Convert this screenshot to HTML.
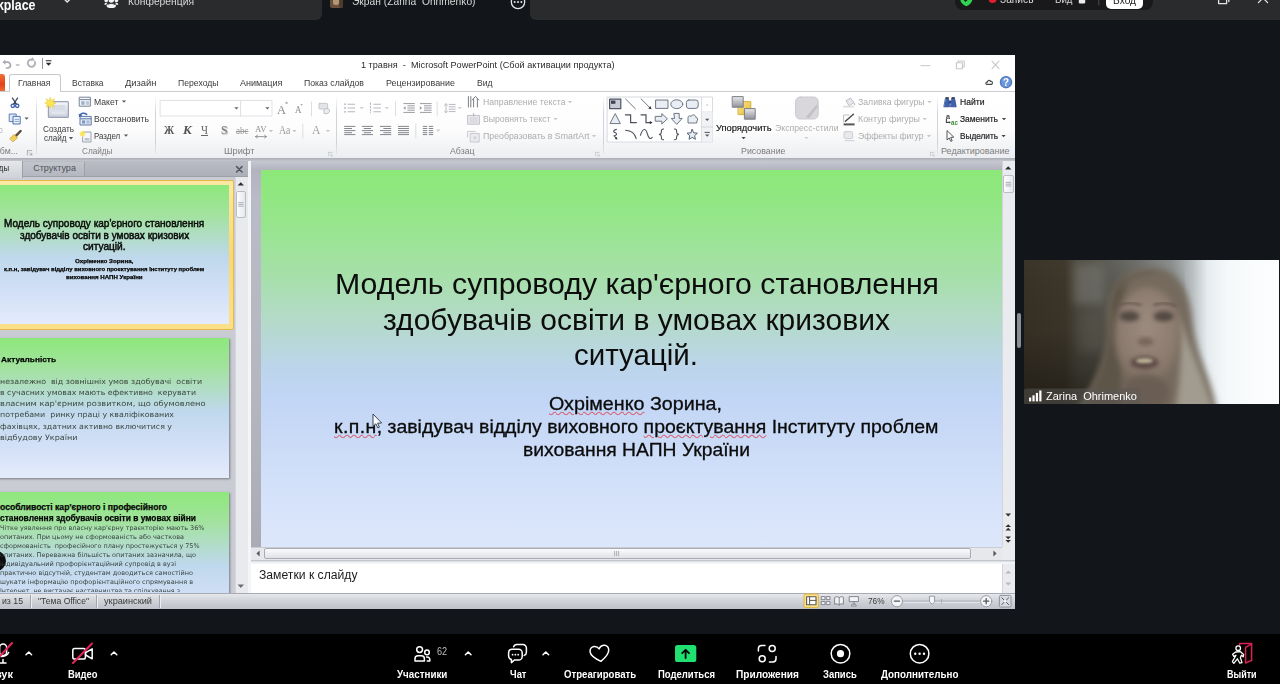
<!DOCTYPE html>
<html lang="uk">
<head>
<meta charset="utf-8">
<title>Zoom</title>
<style>
html,body{margin:0;padding:0;}
body{width:1280px;height:684px;overflow:hidden;background:#12161a;position:relative;font-family:"Liberation Sans","DejaVu Sans",sans-serif;}
.abs{position:absolute;}
.t{position:absolute;white-space:nowrap;line-height:1;transform-origin:0 0;font-size:11px;color:#3b3b3b;}
svg{position:absolute;overflow:visible;}
/* top bar */
#topbar{left:0;top:0;width:1280px;height:19.5px;background:#2a2b2d;}
#acttab{left:316px;top:-10px;width:220px;height:29.5px;background:#2a2b2d;}
#acttab i{position:absolute;left:6px;top:0;width:208px;height:29.5px;background:#12161a;}
#acttab:before,#acttab:after{content:"";position:absolute;top:0;width:6px;height:29.5px;background:#2a2b2d;z-index:2;}
#acttab:before{left:0;border-bottom-right-radius:6px;}
#acttab:after{right:0;border-bottom-left-radius:6px;}
#acttab b{position:absolute;left:0;top:19.5px;width:220px;height:10px;background:#12161a;z-index:1;}
#pill{left:955px;top:-10px;width:198px;height:20px;border-radius:8px;background:#19191b;}
#vhod{left:1106px;top:-10px;width:37px;height:19px;border-radius:5px;background:#fff;}
.w{color:#fff;}
.tw{color:#d8d8d8;}
/* ---- ppt chrome ---- */
#ppt{left:0;top:54.5px;width:1015px;height:554.5px;background:#fff;}
.pg{color:#adadad;}
.pl{color:#7d7d7d;}
.pb{color:#1e1e1e;-webkit-text-stroke:.2px #1e1e1e;}
#tabline{left:0;top:91px;width:1015px;height:1px;background:#c9ccd1;}
#hometab{left:9px;top:74px;width:52px;height:18px;border:1px solid #c5c8cd;border-bottom:none;border-radius:3px 3px 0 0;background:#fff;box-sizing:border-box;}
#filebtn{left:-10px;top:74px;width:15px;height:17px;border-radius:0 3px 0 0;background:linear-gradient(#f0703c,#e2431c 60%,#ef6a30);}
#ribbon{left:0;top:92px;width:1015px;height:66px;background:linear-gradient(#ffffff 0%,#fdfdfd 55%,#eceef1 100%);}
.gsep{position:absolute;top:96px;width:1px;height:58px;background:linear-gradient(rgba(200,203,208,0),#d0d3d8 30%,#d0d3d8 80%,rgba(200,203,208,.3));}
#band{left:0;top:158px;width:1015px;height:3px;background:linear-gradient(#a9acb3,#c5c7ce);}
#work{left:0;top:161px;width:1015px;height:432px;background:#c3c6ce;}

/* ---- work area ---- */
#lpane{left:0;top:161px;width:248px;height:432px;background:#c9ccd3;}
#lhead{left:0;top:161px;width:248px;height:15px;background:linear-gradient(#b9bcc4,#adb0b9);border-bottom:1px solid #9da1aa;}
#ltab1{left:-10px;top:161px;width:33px;height:16.5px;background:linear-gradient(#e4e6ea,#cfd2d8);border-right:1px solid #9da1aa;box-sizing:border-box;}
#ltab2{left:23px;top:162px;width:61.5px;height:14px;background:linear-gradient(#c2c5cc,#b4b7bf);border-right:1px solid #9da1aa;box-sizing:border-box;}
.thumb{position:absolute;left:-20px;width:249px;overflow:hidden;background:linear-gradient(#8ee87b 0%,#a3e2a0 22%,#bfd8ec 52%,#d3e0f8 78%,#e4ecfb 100%);box-shadow:1px 1px 2px rgba(90,90,100,.7);}
#sel{left:-20px;top:180px;width:254px;height:150px;box-sizing:border-box;border:1px solid #e5b94a;border-radius:2px;background:linear-gradient(#fbe9a4,#f9d873 50%,#fbe08a);}
#lscroll{left:235px;top:177px;width:13px;height:416px;background:#e8eaee;border-left:1px solid #d5d7dc;box-sizing:border-box;}
#lthumb{left:236px;top:191px;width:10px;height:27px;border:1px solid #b9bcc3;border-radius:2px;background:linear-gradient(90deg,#fdfdfd,#e6e8ec);box-sizing:border-box;}
#split{left:248px;top:161px;width:3px;height:432px;background:#f4f5f7;}
#main{left:251px;top:161px;width:764px;height:386px;background:linear-gradient(#c6c8d0 0,#b3b3bf 9px,#b9bbc6 40px,#b4b7c0 60%,#a9acb4 100%);}
#slide{left:261px;top:170px;width:741px;height:377px;background:linear-gradient(#8ce878 0%,#94e688 12%,#a5e0a7 27%,#b4dac9 40%,#bcd5ea 52%,#c1d5f5 60%,#cfdef8 78%,#dde7fb 100%);}
#vscroll{left:1002px;top:161px;width:13px;height:386px;background:#e9ebef;border-left:1px solid #d3d5da;box-sizing:border-box;}
#vthumb{left:1003px;top:175px;width:11px;height:18px;border:1px solid #b9bcc3;border-radius:2px;background:linear-gradient(90deg,#fdfdfd,#e6e8ec);box-sizing:border-box;}
#hscroll{left:251px;top:547px;width:751px;height:13px;background:#e6e8ec;border-top:1px solid #c9ccd2;box-sizing:border-box;}
#hthumb{left:264px;top:548px;width:707px;height:11px;border:1px solid #a9acb4;border-radius:2px;background:linear-gradient(#fbfbfc,#dfe1e6);box-sizing:border-box;}
#corner{left:1002px;top:547px;width:13px;height:13px;background:#e9ebef;}
#nsplit{left:251px;top:560px;width:764px;height:4px;background:linear-gradient(#b5b8c0,#eceef1 50%,#f6f7f9);}
#notes{left:251px;top:564px;width:751px;height:29px;background:#fff;}
#nscroll{left:1002px;top:564px;width:13px;height:29px;background:#e9ebef;border-left:1px solid #d3d5da;box-sizing:border-box;}
#status{left:0;top:592.5px;width:1015px;height:16.5px;background:linear-gradient(#e6e8ec,#d2d5da 40%,#c6c9cf 75%,#bfc2c9 100%);border-top:1px solid #a8abb3;box-sizing:border-box;}
.ssep{position:absolute;top:595px;width:1px;height:13px;background:#a2a5ad;box-shadow:1px 0 0 #eceef1;}
.st{color:#111;}
.ttl{color:#0d0d0d;}
.k{color:#0b0b0b;-webkit-text-stroke:.3px #0b0b0b;}
.th1{color:#0a0d0a;-webkit-text-stroke:.5px #0a0d0a;}
.th1s{color:#050705;font-weight:bold;-webkit-text-stroke:.25px #050705;}
.th2{color:#3c4842;font-family:"DejaVu Sans","Liberation Sans",sans-serif;}
.th3{color:#37433f;font-family:"DejaVu Sans","Liberation Sans",sans-serif;}
.ser{font-family:"Liberation Serif","DejaVu Serif",serif;}
.sq{text-decoration:underline wavy rgba(222,60,72,.75) .8px;text-underline-offset:1px;}

#bottombar{left:0;top:634px;width:1280px;height:50px;background:#000;}
.bl{color:#fff;font-weight:bold;}
</style>
</head>
<body>
<!-- ============ TOP BAR ============ -->
<div id="topbar" class="abs"></div>
<div id="acttab" class="abs"><b></b><i></i></div>
<div class="t w" style="left:-27.5px;top:-1.85px;font-size:14px;transform:scaleX(0.8859);font-weight:bold;">Workplace</div>
<div class="t tw" style="left:128px;top:-3.61px;font-size:11px;transform:scaleX(0.9364);">Конференция</div>
<div class="t tw" style="left:352px;top:-3.71px;font-size:11px;transform:scaleX(0.9321);">Экран (Zarina&nbsp; Ohrimenko)</div>
<svg style="left:0;top:0;" width="1280" height="20" viewBox="0 0 1280 20" fill="none" stroke-linecap="round" stroke-linejoin="round">
<path d="M64.6 -0.6 L67.2 2 L69.8 -0.6" stroke="#e8e8e8" stroke-width="1.4"/>
<!-- group icon -->
<g fill="#f4f4f4"><circle cx="111.300" cy="0" r="2.700"/><circle cx="106.200" cy="0.300" r="1.900"/><circle cx="116.400" cy="0.300" r="1.900"/><ellipse cx="111.300" cy="5.700" rx="4.700" ry="2.300"/><path d="M104.300 4.600 c0 -1.600 1.600 -2.200 3.400 -1.800 c-.8 .5 -1.400 1.200 -1.600 2.200 z M118.300 4.600 c0 -1.600 -1.600 -2.200 -3.400 -1.800 c.8 .5 1.400 1.200 1.600 2.200 z"/></g>
<path d="M107.800 4.400 c2 -1.300 5 -1.300 7 0" stroke="#2a2b2d" stroke-width=".9" fill="none"/>
<!-- avatar -->
<rect x="330" y="-6" width="13" height="14" rx="2.5" fill="#6b513a"/>
<rect x="333" y="-4" width="6" height="9" rx="2.5" fill="#b39676"/>
<rect x="339.4" y="-6" width="3.6" height="14" rx="1.5" fill="#4d3a2b"/>
<!-- more -->
<circle cx="518" cy="2" r="6.7" stroke="#e6e6e6" stroke-width="1.3"/>
<g fill="#e6e6e6"><circle cx="514.6" cy="2" r="1"/><circle cx="518" cy="2" r="1"/><circle cx="521.4" cy="2" r="1"/></g>
</svg>
<div id="pill" class="abs"></div>
<div class="t tw" style="left:1000px;top:-6.31px;font-size:11px;transform:scaleX(0.9281);">Запись</div>
<div class="t tw" style="left:1054.5px;top:-6.31px;font-size:11px;transform:scaleX(0.8791);">Вид</div>
<div id="vhod" class="abs"></div>
<div class="t" style="left:1113px;top:-5.39px;font-size:10.5px;transform:scaleX(0.9678);color:#222;">Вход</div>
<svg style="left:0;top:0;" width="1280" height="20" viewBox="0 0 1280 20" fill="none" stroke-linecap="round" stroke-linejoin="round">
<path d="M960.2 -4 V-1 C960.2 2.4 963 5 966.3 6.3 C969.6 5 972.4 2.4 972.4 -1 V-4 Z" fill="#2fd251"/>
<path d="M963.4 -1.4 L965.6 1 L969.6 -3.4" stroke="#1b1c1e" stroke-width="1.5"/>
<circle cx="992.6" cy="-0.9" r="3.9" fill="#e0202c"/>
<rect x="1078.8" y="-4" width="6.4" height="7.4" rx=".8" fill="#ededed"/>
<path d="M1098.8 -4 V5" stroke="#4a4b4e" stroke-width="1"/>
<path d="M1218.6 -4 V3.6 H1226.6 V-4 M1228.8 1.6 V-4" stroke="#e4e4e4" stroke-width="1.3"/>
<path d="M1258.4 -6.6 L1267.6 2.6 M1258.4 2.6 L1267.6 -6.6" stroke="#e4e4e4" stroke-width="1.3"/>
</svg>


<!-- ============ POWERPOINT ============ -->
<div id="ppt" class="abs"></div>
<div class="t" style="left:361px;top:61.38px;font-size:9px;transform:scaleX(1.0137);color:#2b2b2b;">1 травня&nbsp; -&nbsp; Microsoft PowerPoint (Сбой активации продукта)</div>
<svg style="left:0;top:55px;" width="1015" height="40" viewBox="0 55 1015 40" fill="none" stroke-linecap="round" stroke-linejoin="round">
<!-- undo -->
<path d="M4 62.2 H7.6 a2.9 2.9 0 0 1 0 5.8 H6.4" stroke="#a9acb2" stroke-width="1.7"/>
<path d="M5.4 59.6 L2.6 62.2 L5.4 64.8 Z" fill="#a9acb2"/>
<path d="M16.4 65 h2.6" stroke="#b5b7bc" stroke-width="1.4"/>
<!-- redo -->
<path d="M35 62 a3.700 3.700 0 1 1 -3.400 -2.600" stroke="#b0b3b9" stroke-width="1.900"/>
<path d="M31.400 57.400 L35 59.600 L31.400 61.800 Z" fill="#b0b3b9" transform="rotate(25 33 59.600)"/>
<path d="M42.5 58.5 V68.5" stroke="#8e9197" stroke-width="1"/>
<path d="M46.2 60.8 h4.8" stroke="#2a2a2a" stroke-width="1.1"/>
<path d="M45.8 62.8 h5.6 l-2.8 3 z" fill="#2a2a2a"/>
<!-- window controls -->
<path d="M921 65.6 h9" stroke="#cfd1d4" stroke-width="1.2"/>
<path d="M956.4 62.8 h6 v6 h-6 z M958.2 62.6 v-1.6 h6 v6 h-1.6" stroke="#c6c8cc" stroke-width="1.1"/>
<path d="M992 61.2 l7 7.4 M999 61.2 l-7 7.4" stroke="#c6c8cc" stroke-width="1.1"/>
<!-- ribbon minimise + help -->
<path d="M986.4 84.4 c-1.4 -1.2 0 -2.6 1 -2.2 c0 -1.6 2 -2.8 3.2 -.8 c1.6 -.6 2.6 1.6 1.2 3 z" stroke="#4a4a4a" stroke-width="1.1"/>
<circle cx="1006" cy="82.2" r="6.2" fill="#5a83c8"/>
<circle cx="1006" cy="82.2" r="5.4" fill="#6f98dc" stroke="#4a72b8" stroke-width=".8"/>
</svg>
<div class="t" style="left:1003px;top:77.11px;font-size:10.5px;transform:scaleX(0.9343);color:#fff;font-weight:bold;">?</div>
<div id="tabline" class="abs"></div>
<div id="hometab" class="abs"></div>
<div id="filebtn" class="abs"></div>
<div class="t" style="left:18px;top:78.88px;font-size:9px;transform:scaleX(0.9485);">Главная</div>
<div class="t" style="left:72px;top:78.88px;font-size:9px;transform:scaleX(0.9416);">Вставка</div>
<div class="t" style="left:125px;top:78.88px;font-size:9px;transform:scaleX(1.0408);">Дизайн</div>
<div class="t" style="left:178px;top:78.88px;font-size:9px;transform:scaleX(0.9593);">Переходы</div>
<div class="t" style="left:240px;top:78.88px;font-size:9px;transform:scaleX(1.0059);">Анимация</div>
<div class="t" style="left:304px;top:78.88px;font-size:9px;transform:scaleX(0.9682);">Показ слайдов</div>
<div class="t" style="left:386px;top:78.88px;font-size:9px;transform:scaleX(0.9928);">Рецензирование</div>
<div class="t" style="left:477px;top:78.88px;font-size:9px;transform:scaleX(0.9511);">Вид</div>
<div id="ribbon" class="abs"></div>
<div class="gsep" style="left:36px;"></div>
<div class="gsep" style="left:155px;"></div>
<div class="gsep" style="left:336px;"></div>
<div class="gsep" style="left:603px;"></div>
<div class="gsep" style="left:937px;"></div>
<div class="t pl" style="left:-7.5px;top:146.68px;font-size:9px;transform:scaleX(0.9744);">Обм...</div>
<div class="t pl" style="left:82px;top:147.38px;font-size:9px;transform:scaleX(0.9100);">Слайды</div>
<div class="t pl" style="left:224px;top:147.38px;font-size:9px;transform:scaleX(1.0295);">Шрифт</div>
<div class="t pl" style="left:450px;top:147.38px;font-size:9px;transform:scaleX(0.9703);">Абзац</div>
<div class="t pl" style="left:741px;top:147.38px;font-size:9px;transform:scaleX(0.9817);">Рисование</div>
<div class="t pl" style="left:941px;top:147.38px;font-size:9px;">Редактирование</div>
<div class="t" style="left:43px;top:124.58px;font-size:9px;transform:scaleX(0.9063);">Создать</div>
<div class="t" style="left:44.4px;top:133.78px;font-size:9px;transform:scaleX(0.8983);">слайд</div>
<div class="t" style="left:94.4px;top:97.68px;font-size:9px;transform:scaleX(0.9574);">Макет</div>
<div class="t" style="left:94.4px;top:114.78px;font-size:9px;transform:scaleX(0.9542);">Восстановить</div>
<div class="t" style="left:94.4px;top:131.88px;font-size:9px;transform:scaleX(0.8807);">Раздел</div>
<div class="t pg" style="left:482.5px;top:98.38px;font-size:9px;transform:scaleX(0.9669);">Направление текста</div>
<div class="t pg" style="left:482.5px;top:115.38px;font-size:9px;transform:scaleX(0.9628);">Выровнять текст</div>
<div class="t pg" style="left:482.5px;top:132.38px;font-size:9px;transform:scaleX(0.9755);">Преобразовать в SmartArt</div>
<div class="t pb" style="left:716px;top:124.38px;font-size:9px;transform:scaleX(1.0362);">Упорядочить</div>
<div class="t pg" style="left:775px;top:124.38px;font-size:9px;transform:scaleX(0.9646);">Экспресс-стили</div>
<div class="t pg" style="left:857.5px;top:98.38px;font-size:9px;transform:scaleX(0.9675);">Заливка фигуры</div>
<div class="t pg" style="left:857.5px;top:115.38px;font-size:9px;transform:scaleX(0.9851);">Контур фигуры</div>
<div class="t pg" style="left:857.5px;top:132.38px;font-size:9px;transform:scaleX(0.9556);">Эффекты фигур</div>
<div class="t pb" style="left:960px;top:98.38px;font-size:9px;transform:scaleX(0.9538);">Найти</div>
<div class="t pb" style="left:960px;top:115.38px;font-size:9px;transform:scaleX(0.9394);">Заменить</div>
<div class="t pb" style="left:960px;top:132.38px;font-size:9px;transform:scaleX(0.9150);">Выделить</div>
<svg style="left:0;top:92px;" width="1015" height="66" viewBox="0 92 1015 66" fill="none" stroke-linecap="round" stroke-linejoin="round">
<defs><linearGradient id="gsl" x1="0" y1="0" x2="0" y2="1"><stop offset="0" stop-color="#f4f6fa"/><stop offset="1" stop-color="#c9d0dc"/></linearGradient><linearGradient id="gye" x1="0" y1="0" x2="1" y2="1"><stop offset="0" stop-color="#fbe68a"/><stop offset="1" stop-color="#e3b93a"/></linearGradient><linearGradient id="ggr" x1="0" y1="0" x2="0" y2="1"><stop offset="0" stop-color="#e9e9ec"/><stop offset="1" stop-color="#8f9198"/></linearGradient></defs>
<g><path d="M12.4 98 L16.6 104.4 M17.6 98 L13.4 104.4" stroke="#39435a" stroke-width="1.3"/><circle cx="12.8" cy="105.8" r="1.7" stroke="#3d5fb0" stroke-width="1.3"/><circle cx="17.2" cy="105.8" r="1.7" stroke="#3d5fb0" stroke-width="1.3"/></g>
<rect x="9.6" y="114" width="6.6" height="7.6" fill="#dfe8f6" stroke="#5f7fb6" stroke-width="1"/><rect x="13.4" y="116.4" width="6.8" height="7.6" fill="#eef3fb" stroke="#4f72ae" stroke-width="1"/><path d="M15 119.4 h3.6 M15 121.4 h3.6" stroke="#6f8fc4" stroke-width=".8"/>
<path d="M24.5 117.5 h4.2 l-2.1 2.3 z" fill="#5a5a5a"/>
<path d="M20.6 131 L15.4 136.4" stroke="#5a4a3a" stroke-width="2.4"/><path d="M10 138.6 L14 134.4 L17.6 137.8 L13.2 141.6 Z" fill="#f1cf5a" stroke="#caa23a" stroke-width=".8"/>
<path d="M0 128.5 h2 v4 h-2" stroke="#c9cbd0" stroke-width="1"/>
<path d="M27.4 150.6 h-0 v4.4 M27.4 150.6 h4.4 M29.6 152.8 l2.2 2.2 M31.8 153.2 v1.8 h-1.8" stroke="#a6a9b0" stroke-width=".9"/>
<rect x="48.4" y="101.6" width="20" height="15.8" rx="1" fill="url(#gsl)" stroke="#9aa4b6" stroke-width="1.2"/><rect x="51.6" y="105" width="13.6" height="5.2" fill="#d7dce6"/><rect x="51.6" y="111.6" width="13.6" height="2.6" fill="#e3e6ed"/>
<path d="M50.2 97.4 l1.2 3 l3.2 -1.6 l-1.6 3.2 l3 1.2 l-3 1 l1.4 3 l-3.2 -1.4 l-1 3 l-1.2 -3 l-3 1.4 l1.4 -3.2 l-2.8 -1 l2.8 -1.2 l-1.4 -3 l3.2 1.6 z" fill="#fbe455" stroke="#e8c63a" stroke-width=".5"/>
<path d="M68.9 137.1 h4.2 l-2.1 2.3 z" fill="#555"/>
<rect x="79.6" y="97.2" width="10.8" height="9" fill="#f2f4f8" stroke="#7b8698" stroke-width="1"/><path d="M79.6 99.6 h10.8" stroke="#7b8698" stroke-width="1"/><rect x="81.2" y="101.2" width="3.4" height="3.6" fill="#9eb0cc"/><rect x="85.8" y="101.2" width="3.4" height="3.6" fill="#b9c4d6"/>
<path d="M121.9 100.5 h4.2 l-2.1 2.3 z" fill="#555"/>
<rect x="80.4" y="116.4" width="10.8" height="8.6" fill="#e6ebf4" stroke="#5f7aa8" stroke-width="1"/><path d="M80.4 118.8 h10.8" stroke="#5f7aa8" stroke-width="1"/><rect x="82" y="120.4" width="3.2" height="3.2" fill="#7f9bc8"/><rect x="86.4" y="120.4" width="3.2" height="3.2" fill="#a9bbd8"/><path d="M79.6 116 c1.2 -3 4.6 -3.6 7 -1.6" stroke="#3e68b4" stroke-width="1.6"/><path d="M78.6 113.4 l.6 3.6 l3.2 -1.2 z" fill="#3e68b4"/>
<rect x="83" y="132" width="8" height="10" fill="#f5f6f9" stroke="#9aa1ae" stroke-width="1"/><rect x="84.6" y="138" width="4.8" height="2.6" fill="#bfc5d0"/><path d="M82.4 130.2 l.8 1.8 l2 -.8 l-1 1.8 l1.8 .8 l-1.8 .8 l.8 1.8 l-1.8 -.8 l-.8 1.8 l-.8 -1.8 l-1.8 .8 l.8 -1.8 l-1.8 -.8 l1.8 -.8 l-.8 -1.8 l1.8 .8 z" fill="#fbe455"/>
<path d="M123.9 134.5 h4.2 l-2.1 2.3 z" fill="#555"/>
<rect x="160.5" y="100.5" width="80.5" height="15.5" fill="#fff" stroke="#dfe1e6" stroke-width="1"/><rect x="241" y="100.5" width="31" height="15.5" fill="#fff" stroke="#dfe1e6" stroke-width="1"/>
<path d="M234.3 107.3 h4.2 l-2.1 2.3 z" fill="#666"/>
<path d="M265.3 107.3 h4.2 l-2.1 2.3 z" fill="#666"/>
</svg>
<svg style="left:0;top:92px;" width="1015" height="66" viewBox="0 92 1015 66" fill="none" stroke-linecap="round" stroke-linejoin="round">
<path d="M311.5 102 V116" stroke="#dcdee2" stroke-width="1"/><path d="M302.8 124 V138" stroke="#dcdee2" stroke-width="1"/>
<path d="M285 103.4 l1.6 -1.8 l1.6 1.8 z" fill="#9a9a9a"/><path d="M300.2 104.2 l1.4 1.6 l1.4 -1.6 z" fill="#9a9a9a"/>
<rect x="319" y="103.4" width="8.6" height="5.6" rx=".8" fill="#e3e4e8" stroke="#b9bbc2" stroke-width=".8"/><path d="M324 110 c2 -2.4 5.4 -1.6 5.6 .6 c.2 2 -2.4 3.6 -5 3 z" fill="#eceef2" stroke="#b4b6be" stroke-width=".9"/>
<path d="M255.6 136.6 H266.4 M255.6 136.6 l1.8 -1.4 M255.6 136.6 l1.8 1.4 M266.4 136.6 l-1.8 -1.4 M266.4 136.6 l-1.8 1.4" stroke="#8e8e8e" stroke-width=".9"/>
<path d="M268.9 129.9 h4.2 l-2.1 2.3 z" fill="#c2c2c2"/>
<path d="M292.3 129.9 h4.2 l-2.1 2.3 z" fill="#c2c2c2"/>
<path d="M325.9 129.9 h4.2 l-2.1 2.3 z" fill="#c8c8c8"/>
<path d="M328.6 152.4 v3.6 M328.6 152.4 h3.6 M330.4 154.2 l1.8 1.8 M332.2 154.6 v1.4 h-1.4" stroke="#c4c6cb" stroke-width=".8"/>
<g fill="#b5b7bc"><circle cx="345" cy="104.2" r=".9"/><circle cx="345" cy="108" r=".9"/><circle cx="345" cy="111.8" r=".9"/></g>
<path d="M347.6 104.2 H355 M347.6 108 H355 M347.6 111.8 H355" stroke="#b5b7bc" stroke-width="1.1" stroke-linecap="butt"/>
<path d="M359.6 106.9 h4.2 l-2.1 2.3 z" fill="#cfcfcf"/>
<path d="M370.4 103 V113" stroke="#b5b7bc" stroke-width="1" stroke-dasharray="1.6 1.6"/>
<path d="M373.4 104.2 H380.8 M373.4 108 H380.8 M373.4 111.8 H380.8" stroke="#b5b7bc" stroke-width="1.1" stroke-linecap="butt"/>
<path d="M384.7 106.9 h4.2 l-2.1 2.3 z" fill="#cfcfcf"/>
<path d="M395.5 102 V116" stroke="#dcdee2" stroke-width="1"/><path d="M437.2 102 V116" stroke="#dcdee2" stroke-width="1"/><path d="M415.8 124 V138" stroke="#dcdee2" stroke-width="1"/>
<path d="M403.4 103.6 H414.8 M407.4 105.8 H414.8 M407.4 108 H414.8 M407.4 110.2 H414.8 M403.4 112.4 H414.8" stroke="#9a9ca2" stroke-width="1" stroke-linecap="butt"/>
<path d="M405.6 106.2 L403.2 108 L405.6 109.8 Z" fill="#9a9ca2"/>
<path d="M420 103.6 H431.6 M424 105.8 H431.6 M424 108 H431.6 M424 110.2 H431.6 M420 112.4 H431.6" stroke="#9a9ca2" stroke-width="1" stroke-linecap="butt"/>
<path d="M419.8 106.2 L422.2 108 L419.8 109.8 Z" fill="#9a9ca2"/>
<path d="M448.8 104.4 H455.6 M448.8 106.8 H455.6 M448.8 109.2 H455.6 M448.8 111.6 H455.6" stroke="#b5b7bc" stroke-width="1" stroke-linecap="butt"/>
<path d="M446 104 V112.4 M444.6 105.4 L446 103.6 L447.4 105.4 M444.6 111 L446 112.8 L447.4 111" stroke="#b5b7bc" stroke-width=".9"/>
<path d="M457.7 106.9 h4.2 l-2.1 2.3 z" fill="#cfcfcf"/>
<path d="M344.2 126.4 H355.4 M344.2 128.5 H352 M344.2 130.6 H355.4 M344.2 132.7 H352 M344.2 134.6 H355.4" stroke="#85878d" stroke-width="1" stroke-linecap="butt"/>
<path d="M361.8 126.4 H373 M363.8 128.5 H371 M361.8 130.6 H373 M363.8 132.7 H371 M361.8 134.6 H373" stroke="#85878d" stroke-width="1" stroke-linecap="butt"/>
<path d="M380 126.4 H391.2 M383.4 128.5 H391.2 M380 130.6 H391.2 M383.4 132.7 H391.2 M380 134.6 H391.2" stroke="#85878d" stroke-width="1" stroke-linecap="butt"/>
<path d="M398 126.4 H409 M398 128.5 H409 M398 130.6 H409 M398 132.7 H409 M398 134.6 H409" stroke="#85878d" stroke-width="1" stroke-linecap="butt"/>
<path d="M422.8 126.4 H427.2 M422.8 128.5 H427.2 M422.8 130.6 H427.2 M422.8 132.7 H427.2 M422.8 134.6 H427.2" stroke="#85878d" stroke-width="1" stroke-linecap="butt"/>
<path d="M428.8 126.4 H433.2 M428.8 128.5 H433.2 M428.8 130.6 H433.2 M428.8 132.7 H433.2 M428.8 134.6 H433.2" stroke="#85878d" stroke-width="1" stroke-linecap="butt"/>
<path d="M436.1 129.5 h4.2 l-2.1 2.3 z" fill="#c8c8c8"/>
<path d="M468.4 96.6 V107 M470.8 96.6 V107 M473.6 98.6 V107 M477.4 98.6 V107 M472.2 100 L475.5 96.4 L478.8 100" stroke="#7d7f86" stroke-width="1"/>
<rect x="468" y="115.4" width="11.4" height="8.8" fill="#ececf0" stroke="#b9bbc2" stroke-width=".9"/><path d="M470 118 h7.4 M470 120 h7.4 M470 122 h7.4" stroke="#c3c5cb" stroke-width=".8"/><path d="M473.7 113.6 v2.4" stroke="#a9abb2" stroke-width="1"/>
<rect x="470.6" y="133.4" width="8.6" height="8.6" fill="#ebebef" stroke="#c2c3ca" stroke-width=".9"/><path d="M467.6 137 v-5.6 h7.6" stroke="#c2c3ca" stroke-width=".9"/><rect x="473.4" y="136.4" width="3" height="3" fill="#d2d3d9"/>
<path d="M567.9 100.9 h4.2 l-2.1 2.3 z" fill="#c6c6c6"/>
<path d="M553.4 117.9 h4.2 l-2.1 2.3 z" fill="#c6c6c6"/>
<path d="M591.9 134.9 h4.2 l-2.1 2.3 z" fill="#c6c6c6"/>
<path d="M595.6 152.4 v3.6 M595.6 152.4 h3.6 M597.4 154.2 l1.8 1.8 M599.2 154.6 v1.4 h-1.4" stroke="#c4c6cb" stroke-width=".8"/>
<rect x="607.5" y="97" width="105" height="45" fill="#fff" stroke="#d9dbe0" stroke-width="1"/>
<path d="M701.5 97 V142 M701.5 112 H712.5 M701.5 127 H712.5" stroke="#dcdee3" stroke-width="1"/><rect x="702" y="112.5" width="10.5" height="29" fill="#f1f2f5"/><path d="M701.5 127 H712.5" stroke="#d3d5da" stroke-width="1"/>
<path d="M705.6 105.4 h3 l-1.5 -1.8 z" fill="#d0d0d0"/>
<path d="M705.1 118.7 h4.2 l-2.1 2.3 z" fill="#555"/>
<path d="M705 132.4 h4.4" stroke="#555" stroke-width="1"/>
<path d="M705.1 134.5 h4.2 l-2.1 2.3 z" fill="#555"/>
<rect x="609.6" y="99.2" width="11.2" height="9.4" fill="#c9ccd6" stroke="#4f5562" stroke-width="1.2"/><rect x="611" y="100.6" width="4.4" height="3.2" fill="#3f4450"/>
<path d="M625.6 99 L635.4 108.8" stroke="#6f7684" stroke-width="1"/>
<path d="M641.2 99 L650.6 108.4" stroke="#6f7684" stroke-width="1"/><path d="M651.4 109.2 l-3.2 -.8 l2.4 -2.4 z" fill="#333"/>
<rect x="656" y="100" width="12" height="8.4" fill="#e9edf4" stroke="#6f7684" stroke-width="1"/>
<ellipse cx="676.8" cy="104.2" rx="6" ry="4.4" fill="#e9edf4" stroke="#6f7684" stroke-width="1"/>
<rect x="686.4" y="100" width="11.8" height="8.4" rx="2.4" fill="#e9edf4" stroke="#6f7684" stroke-width="1"/>
<path d="M615.4 114 L620.4 123.6 H610.4 Z" fill="#e9edf4" stroke="#6f7684" stroke-width="1"/>
<path d="M625.4 114.8 H630.6 V122.6 H636.4" stroke="#4c515c" stroke-width="1.2" stroke-linejoin="miter"/>
<path d="M641 114.8 H646 V122.6 H650.6" stroke="#4c515c" stroke-width="1.2" stroke-linejoin="miter"/><path d="M652.6 122.6 l-2.8 -1.6 v3.2 z" fill="#333"/>
<path d="M655.6 116.4 H661.8 V113.6 L667.4 118.8 L661.8 124 V121.2 H655.6 Z" fill="#e9edf4" stroke="#6f7684" stroke-width="1"/>
<path d="M674.2 113.4 H679.2 V118.4 H682.2 L676.7 124.4 L671.2 118.4 H674.2 Z" fill="#e9edf4" stroke="#6f7684" stroke-width="1"/>
<path d="M688 122.6 V117.6 c0 -2 2.4 -2.4 3 -1 c.8 -2.6 5 -2 4.8 .8 c2.2 0 2.4 2.8 1 3.6 V122.6 Z" fill="#e9edf4" stroke="#6f7684" stroke-width="1"/>
<path d="M616.4 129.4 c-3 .6 -3.6 2.4 -1.4 3.2 c2.6 1 1.6 2.8 -1 3.2 l2.6 2.6" stroke="#4c515c" stroke-width="1.1"/><path d="M617.6 139.4 l-2.8 -.4 l1.8 -2 z" fill="#333"/>
<path d="M625.6 130.2 C631 130.6 635 133.6 636.2 138.6" stroke="#4c515c" stroke-width="1.1"/>
<path d="M640.4 135.2 C643.4 126.6 646 129.2 647.4 134 C648.6 138.4 650.6 139.6 652.2 137.4" stroke="#4c515c" stroke-width="1.1"/>
<path d="M663.6 129 c-2.4 0 -2.2 1.4 -2.2 3 c0 1.6 -.6 2.2 -2 2.4 c1.4 .2 2 .8 2 2.4 c0 1.6 -.2 3 2.2 3" stroke="#4c515c" stroke-width="1.1"/>
<path d="M674.4 129 c2.4 0 2.2 1.4 2.2 3 c0 1.6 .6 2.2 2 2.4 c-1.4 .2 -2 .8 -2 2.4 c0 1.6 .2 3 -2.2 3" stroke="#4c515c" stroke-width="1.1"/>
<path d="M692.2 129.4 l1.5 3.4 l3.7 .4 l-2.8 2.5 l.8 3.6 l-3.2 -1.9 l-3.2 1.9 l.8 -3.6 l-2.8 -2.5 l3.7 -.4 z" fill="#e9edf4" stroke="#55627a" stroke-width="1"/>
<rect x="738.4" y="101.6" width="12.4" height="13" fill="url(#gye)" stroke="#d6b23a" stroke-width="1"/>
<rect x="732.6" y="96.6" width="10.6" height="10.6" fill="url(#ggr)" stroke="#7c7e86" stroke-width="1"/>
<rect x="744.8" y="108.6" width="10.4" height="10.6" fill="url(#ggr)" stroke="#7c7e86" stroke-width="1"/>
<path d="M741.5 136.9 h4.2 l-2.1 2.3 z" fill="#444"/>
<rect x="795.6" y="97" width="22.6" height="22" rx="4.6" fill="#d9d7db" stroke="#cbc9ce" stroke-width="1"/><path d="M806 117 L816.6 104.6 L818 106.4 L809 118.4 Z" fill="#c3c1c7"/>
<path d="M804.3 136.9 h4.2 l-2.1 2.3 z" fill="#cfcfcf"/>
<path d="M846.4 100.6 l4 -2.6 l3.6 4.6 l-4.6 3 z" fill="#e8e8ec" stroke="#b7b8c0" stroke-width=".9"/><path d="M854.6 102.4 c.8 1.4 1 2.4 0 2.8 c-1 -.4 -.8 -1.4 0 -2.8 z" fill="#b7b8c0"/><path d="M843.6 106.6 h10" stroke="#dcdde2" stroke-width="1.6"/>
<path d="M845.4 121.2 L853.4 114.2" stroke="#4a4a50" stroke-width="1.5"/><path d="M843.6 122 V115 H849" stroke="#b7b8c0" stroke-width=".9"/><path d="M843.6 124.4 h11" stroke="#55565c" stroke-width="2" stroke-linecap="butt"/>
<rect x="844" y="131.6" width="8.6" height="7" rx="1.4" fill="#e9e9ed" stroke="#c8c9cf" stroke-width=".9"/><path d="M845 140.6 h9" stroke="#d6d7dc" stroke-width="1.4"/>
<path d="M927.5 100.9 h4.2 l-2.1 2.3 z" fill="#c6c6c6"/>
<path d="M922.7 117.9 h4.2 l-2.1 2.3 z" fill="#c6c6c6"/>
<path d="M926.9 134.9 h4.2 l-2.1 2.3 z" fill="#c6c6c6"/>
<path d="M930.4 152.4 v3.6 M930.4 152.4 h3.6 M932.2 154.2 l1.8 1.8 M934 154.6 v1.4 h-1.4" stroke="#c4c6cb" stroke-width=".8"/>
<path d="M945.8 98.4 h2.6 l1.2 8.4 h-5.4 z M952 98.4 h2.6 l1.6 8.4 h-5.4 z" fill="#3f62b0" stroke="#2d4a8e" stroke-width=".8"/><rect x="948.6" y="100.6" width="3" height="3" fill="#2d4a8e"/><path d="M946 97.8 h2.4 M952 97.8 h2.4" stroke="#222" stroke-width="1.2"/>
<path d="M946.4 119 v3.4 h3.4" stroke="#444" stroke-width="1.1"/><path d="M950.6 123.6 l-1.6 -1.2 l1.6 -1.2 z" fill="#444" transform="rotate(180 949.8 122.4)"/>
<path d="M1001.9 117.9 h4.2 l-2.1 2.3 z" fill="#444"/>
<path d="M1001.5 134.9 h4.2 l-2.1 2.3 z" fill="#444"/>
<path d="M947 131 V140 L949.2 138 L950.8 141.4 L952.2 140.8 L950.6 137.4 L953.4 137.2 Z" fill="#fff" stroke="#444" stroke-width=".9"/>
</svg>
<div class="t ser" style="left:277.4px;top:102.6px;font-size:13px;transform:scaleX(0.9584);color:#8c8c8c;">A</div>
<div class="t ser" style="left:295.2px;top:105.13px;font-size:10px;transform:scaleX(0.8847);color:#8c8c8c;">A</div>
<div class="t ser" style="left:164.2px;top:124.24px;font-size:12px;transform:scaleX(0.8589);color:#555;font-weight:bold;">Ж</div>
<div class="t ser" style="left:182.6px;top:124.24px;font-size:12px;transform:scaleX(1.0810);color:#555;font-weight:bold;font-style:italic;">К</div>
<div class="t ser" style="left:201.4px;top:124.24px;font-size:12px;transform:scaleX(0.8960);color:#666;text-decoration:underline;">Ч</div>
<div class="t ser" style="left:221px;top:124.24px;font-size:12px;transform:scaleX(0.9869);color:#888;font-weight:bold;text-shadow:1px 1px 1px #bbb;">S</div>
<div class="t ser" style="left:236px;top:125.73px;font-size:10px;transform:scaleX(0.8927);color:#9a9a9a;text-decoration:line-through;">abc</div>
<div class="t ser" style="left:255.4px;top:125.12px;font-size:8.6px;transform:scaleX(1.0254);color:#8a8a8a;">AV</div>
<div class="t ser" style="left:279.4px;top:124.44px;font-size:12px;transform:scaleX(0.8143);color:#9a9a9a;">Aa</div>
<div class="t ser" style="left:312px;top:123.4px;font-size:13px;transform:scaleX(0.8945);color:#a0a0a0;">A</div>
<div class="t" style="left:946px;top:112.67px;font-size:7px;transform:scaleX(1.0240);color:#444;font-weight:bold;">a</div>
<div class="t" style="left:950.6px;top:118.67px;font-size:7px;transform:scaleX(0.8721);color:#3a8a3a;font-weight:bold;">ac</div>

<div id="band" class="abs"></div>
<div id="work" class="abs"></div>
<div id="lpane" class="abs"></div>
<div id="lhead" class="abs"></div>
<div id="ltab1" class="abs"></div>
<div id="ltab2" class="abs"></div>
<div class="t" style="left:-20px;top:164.18px;font-size:9px;transform:scaleX(0.8653);color:#222;">Слайды</div>
<div class="t" style="left:33.2px;top:164.18px;font-size:9px;color:#4e5158;">Структура</div>
<div id="sel" class="abs"></div>
<div class="thumb" style="top:185px;height:139px;box-shadow:none;"></div>
<div class="thumb" style="top:338px;height:140px;"></div>
<div class="thumb" style="top:492px;height:101px;background-size:100% 140px;background-repeat:no-repeat;"></div>
<div class="abs" style="left:0;top:161px;width:230px;height:432px;overflow:hidden;">
<div class="abs" style="left:-14px;top:390px;width:20px;height:20px;border-radius:10px;background:#0c0c0c;"></div>
</div>
<div class="t th1" style="left:4.3px;top:218.31px;font-size:10.5px;transform:scaleX(0.9554);">Модель супроводу кар'єрного становлення</div>
<div class="t th1" style="left:19.8px;top:229.61px;font-size:10.5px;transform:scaleX(0.9547);">здобувачів освіти в умовах кризових</div>
<div class="t th1" style="left:82.8px;top:241.01px;font-size:10.5px;transform:scaleX(0.9648);">ситуацій.</div>
<div class="t th1s" style="left:74.7px;top:258.86px;font-size:5.6px;transform:scaleX(1.1088);">Охріменко Зорина,</div>
<div class="t th1s" style="left:4.3px;top:267.46px;font-size:5.6px;transform:scaleX(1.0586);">к.п.н, завідувач відділу виховного проєктування Інституту проблем</div>
<div class="t th1s" style="left:66px;top:275.26px;font-size:5.6px;transform:scaleX(1.0955);">виховання НАПН України</div>
<div class="t th1s" style="left:1px;top:355.83px;font-size:8px;transform:scaleX(1.0371);">Актуальність</div>
<div class="t th2" style="left:0px;top:378.04px;font-size:7.4px;transform:scaleX(1.0658);">незалежно&nbsp; від зовнішніх умов здобувачі&nbsp; освіти</div>
<div class="t th2" style="left:0px;top:389.14px;font-size:7.4px;transform:scaleX(1.0575);">в сучасних умовах мають ефективно&nbsp; керувати</div>
<div class="t th2" style="left:0px;top:400.34px;font-size:7.4px;transform:scaleX(1.1204);">власним кар'єрним розвитком, що обумовлено</div>
<div class="t th2" style="left:0px;top:411.44px;font-size:7.4px;transform:scaleX(1.0664);">потребами&nbsp; ринку праці у кваліфікованих</div>
<div class="t th2" style="left:0px;top:422.64px;font-size:7.4px;transform:scaleX(1.0627);">фахівцях, здатних активно включитися у</div>
<div class="t th2" style="left:0px;top:433.74px;font-size:7.4px;transform:scaleX(1.0922);">відбудову України</div>
<div class="t th1s" style="left:0px;top:502.72px;font-size:8.6px;">особливості кар'єрного і професійного</div>
<div class="t th1s" style="left:0px;top:514.22px;font-size:8.6px;transform:scaleX(0.9758);">становлення здобувачів освіти в умовах війни</div>
<div class="t th3" style="left:0px;top:524.88px;font-size:6.4px;transform:scaleX(1.0138);">Чітке уявлення про власну кар'єрну траєкторію мають 36%</div>
<div class="t th3" style="left:0px;top:533.88px;font-size:6.4px;transform:scaleX(1.0197);">опитаних. При цьому не сформованість або часткова</div>
<div class="t th3" style="left:0px;top:542.88px;font-size:6.4px;transform:scaleX(1.0071);">сформованість&nbsp; професійного плану простежується у 75%</div>
<div class="t th3" style="left:0px;top:551.88px;font-size:6.4px;transform:scaleX(1.0138);">опитаних. Переважна більшість опитаних зазначила, що</div>
<div class="t th3" style="left:0px;top:560.88px;font-size:6.4px;transform:scaleX(1.0233);">індивідуальний профорієнтаційний супровід в вузі</div>
<div class="t th3" style="left:0px;top:569.88px;font-size:6.4px;transform:scaleX(1.0166);">практично відсутній, студентам доводиться самостійно</div>
<div class="t th3" style="left:0px;top:578.88px;font-size:6.4px;transform:scaleX(1.0201);">шукати інформацію профорієнтаційного спрямування в</div>
<div class="abs" style="left:0;top:584px;width:230px;height:8px;overflow:hidden;"><div class="t th3" style="left:0px;top:3.88px;font-size:6.4px;transform:scaleX(0.9922);">Інтернет, не вистачає наставництва та спілкування з</div></div>

<div id="lscroll" class="abs"></div>
<div id="lthumb" class="abs"></div>
<div id="split" class="abs"></div>
<div id="main" class="abs"></div>
<div id="slide" class="abs"></div>
<div class="t ttl" style="left:334.5px;top:268.07px;font-size:30.4px;transform:scaleX(0.9959);">Модель супроводу кар'єрного становлення</div>
<div class="t ttl" style="left:382.5px;top:303.57px;font-size:30.4px;transform:scaleX(0.9884);">здобувачів освіти в умовах кризових</div>
<div class="t ttl" style="left:574px;top:339.07px;font-size:30.4px;transform:scaleX(0.9705);">ситуацій.</div>
<div class="t k" style="left:549px;top:394.54px;font-size:18.5px;transform:scaleX(1.0644);"><span class="sq">Охріменко</span> Зорина,</div>
<div class="t k" style="left:334px;top:417.54px;font-size:18.5px;transform:scaleX(1.0518);"><span class="sq" style="letter-spacing:.4px;">к.п.н</span>, завідувач відділу виховного <span class="sq">проєктування</span> Інституту проблем</div>
<div class="t k" style="left:523px;top:440.54px;font-size:18.5px;transform:scaleX(1.0433);">виховання НАПН України</div>
<svg style="left:373.400px;top:414px;" width="10" height="15" viewBox="0 0 10 15"><path d="M0 0 L0 12.400 L2.900 9.800 L4.800 13.900 L6.400 13.200 L4.600 9.200 L8.600 9 Z" fill="#fff" fill-opacity=".92" stroke="#2b3440" stroke-width=".9" stroke-linejoin="round"/></svg>

<div id="vscroll" class="abs"></div>
<div id="vthumb" class="abs"></div>
<div id="hscroll" class="abs"></div>
<div id="hthumb" class="abs"></div>
<div id="corner" class="abs"></div>
<div id="nsplit" class="abs"></div>
<div id="notes" class="abs"></div>
<div id="nscroll" class="abs"></div>
<div class="t" style="left:259px;top:569.42px;font-size:12.5px;transform:scaleX(0.9728);color:#1a1a1a;">Заметки к слайду</div>
<div id="status" class="abs"></div>
<div class="ssep" style="left:30px;"></div>
<div class="ssep" style="left:96px;"></div>
<div class="ssep" style="left:159px;"></div>
<div class="t" style="left:2px;top:597.38px;font-size:9px;transform:scaleX(0.9690);color:#3a3a3a;">из 15</div>
<div class="t" style="left:38px;top:597.38px;font-size:9px;transform:scaleX(0.9544);color:#3a3a3a;">"Тема Office"</div>
<div class="t" style="left:104px;top:597.38px;font-size:9px;transform:scaleX(1.0223);color:#3a3a3a;">украинский</div>
<div class="t" style="left:868px;top:597.4px;font-size:8.5px;transform:scaleX(0.9697);color:#3a3a3a;">76%</div>
<svg style="left:0;top:161px;" width="1015" height="448" viewBox="0 161 1015 448" fill="none" stroke-linecap="round" stroke-linejoin="round">
<!-- pane close -->
<path d="M236.6 166.6 l5.4 5.4 M242 166.6 l-5.4 5.4" stroke="#55585f" stroke-width="1.6"/>
<!-- left scrollbar arrows + grip -->
<path d="M237.6 185.6 h6.4 l-3.2 -3.4 z" fill="#2e2e2e"/>
<path d="M237.6 584.6 h6.4 l-3.2 3.4 z" fill="#6a6c72"/>
<path d="M238.6 202.6 h4.6 M238.6 204.4 h4.6 M238.6 206.2 h4.6" stroke="#a6a9b0" stroke-width=".9"/>
<!-- main v scrollbar -->
<path d="M1005 169.6 h6.4 l-3.2 -3.4 z" fill="#2e2e2e"/>
<path d="M1006 182.4 h4.8 M1006 184.2 h4.8 M1006 186 h4.8" stroke="#a6a9b0" stroke-width=".9"/>
<path d="M1005.4 513.6 h5.6 l-2.8 3 z" fill="#2e2e2e"/>
<path d="M1005.4 527 h5.6 l-2.8 -2.8 z M1005.4 530.6 h5.6 l-2.8 -2.8 z" fill="#2e2e2e"/>
<path d="M1005.4 536.4 h5.6 l-2.8 2.8 z M1005.4 540 h5.6 l-2.8 2.8 z" fill="#2e2e2e"/>
<!-- h scrollbar -->
<path d="M259.6 550.4 v6 l-3.2 -3 z" fill="#55585f"/>
<path d="M993.4 550.4 v6 l3.2 -3 z" fill="#55585f"/>
<path d="M614.6 551.4 v4.4 M616.6 551.4 v4.4 M618.6 551.4 v4.4" stroke="#a6a9b0" stroke-width=".9"/>
<!-- notes scrollbar -->
<path d="M1005.4 573.6 h5.8 l-2.9 -3 z" fill="#b6b8be"/>
<path d="M1005.4 582.6 h5.8 l-2.9 3 z" fill="#b6b8be"/>
<!-- status: view buttons -->
<rect x="804" y="594" width="14.4" height="13.6" rx="1.6" fill="#fbe08a" stroke="#e3b442" stroke-width="1"/>
<rect x="806.6" y="596.8" width="9.4" height="8" fill="#fff" stroke="#5d5a50" stroke-width="1.1"/><path d="M809.6 596.8 v8 M809.6 600.4 h6.4" stroke="#5d5a50" stroke-width="1"/>
<g stroke="#7a7d84" stroke-width=".9" fill="#f2f3f5"><rect x="821.6" y="596.6" width="3.4" height="3"/><rect x="826.6" y="596.6" width="3.4" height="3"/><rect x="821.6" y="601.6" width="3.4" height="3"/><rect x="826.6" y="601.6" width="3.4" height="3"/></g>
<path d="M835 597.2 c1.6 -.8 3 -.6 4.2 .4 c1.200 -1 2.600 -1.200 4.200 -.4 v7 c-1.600 -.6 -3 -.4 -4.200 .6 c-1.200 -1 -2.600 -1.200 -4.200 -.6 z M839.2 597.600 v7.600" stroke="#7a7d84" stroke-width=".9" fill="#f2f3f5"/>
<path d="M849.6 596.6 h8.800 v5 h-8.800 z M854 601.600 v2.600 M851.6 606 h4.800 l-1.200 -1.800 h-2.400 z" stroke="#7a7d84" stroke-width=".9" fill="#f2f3f5"/>
<!-- zoom slider -->
<circle cx="897" cy="601.2" r="5.6" fill="#f4f5f7" stroke="#9a9da5" stroke-width="1"/><path d="M894.400 601.200 h5.200" stroke="#55585f" stroke-width="1.3"/>
<path d="M904 601.200 H980" stroke="#9a9da5" stroke-width="1"/><path d="M904 602.200 H980" stroke="#eef0f3" stroke-width="1"/>
<path d="M941.6 599.400 v3.600" stroke="#a6a9b0" stroke-width=".9"/>
<path d="M929.800 596.200 h4.800 v5.600 l-2.400 2.600 l-2.400 -2.600 z" fill="#f6f7f9" stroke="#8f929a" stroke-width=".9"/>
<circle cx="986.200" cy="601.200" r="5.600" fill="#f4f5f7" stroke="#9a9da5" stroke-width="1"/><path d="M983.600 601.200 h5.200 M986.200 598.600 v5.200" stroke="#55585f" stroke-width="1.300"/>
<rect x="999.400" y="595.400" width="11.600" height="11.600" rx="1.200" fill="#d9dbe0" stroke="#8f929a" stroke-width="1"/>
<path d="M1001.800 597.800 l2.200 2.200 M1008.600 597.800 l-2.200 2.200 M1001.800 604.600 l2.200 -2.200 M1008.600 604.600 l-2.200 -2.200" stroke="#55585f" stroke-width="1"/><rect x="1004.200" y="600.200" width="2" height="2" fill="#fff" stroke="none"/>
</svg>



<div class="abs" style="left:1017px;top:313px;width:4px;height:35px;border-radius:2px;background:#8b8e94;"></div>
<svg style="left:1024px;top:260px;" width="255" height="144" viewBox="0 0 254 143" preserveAspectRatio="none">
<defs>
<linearGradient id="vbg" x1="0" y1="0" x2="1" y2="0">
<stop offset="0" stop-color="#3b3428"/><stop offset=".16" stop-color="#403a2d"/><stop offset=".21" stop-color="#504d42"/><stop offset=".3" stop-color="#595851"/><stop offset=".45" stop-color="#6f706c"/><stop offset=".58" stop-color="#8d908f"/><stop offset=".66" stop-color="#b9bfc1"/><stop offset=".72" stop-color="#e6ecef"/><stop offset=".8" stop-color="#f6f9fb"/><stop offset="1" stop-color="#fcfdfe"/>
</linearGradient>
<linearGradient id="vdark" x1="0" y1="0" x2="0" y2="1"><stop offset="0" stop-color="#000" stop-opacity="0"/><stop offset=".5" stop-color="#1a1712" stop-opacity=".2"/><stop offset="1" stop-color="#17140f" stop-opacity=".7"/></linearGradient>
<radialGradient id="vface" cx=".5" cy=".42" r=".6"><stop offset="0" stop-color="#9c8b7f"/><stop offset=".7" stop-color="#8c7b6f"/><stop offset="1" stop-color="#7d6e63"/></radialGradient>
<filter id="b3" x="-30%" y="-30%" width="160%" height="160%"><feGaussianBlur stdDeviation="3"/></filter>
<filter id="b5" x="-30%" y="-30%" width="160%" height="160%"><feGaussianBlur stdDeviation="5"/></filter>
<filter id="b2" x="-30%" y="-30%" width="160%" height="160%"><feGaussianBlur stdDeviation="2"/></filter>
<filter id="b15" x="-30%" y="-30%" width="160%" height="160%"><feGaussianBlur stdDeviation="1.5"/></filter>
<clipPath id="vclip"><rect x="0" y="0" width="254" height="143"/></clipPath>
</defs>
<g clip-path="url(#vclip)">
<rect width="254" height="143" fill="url(#vbg)"/>
<rect x="0" y="0" width="160" height="143" fill="url(#vdark)"/>
<rect x="50" y="4" width="30" height="40" fill="#77776f" opacity=".6" filter="url(#b5)"/>
<rect x="56" y="50" width="26" height="40" fill="#54524a" opacity=".6" filter="url(#b5)"/>
<!-- hair back -->
<path d="M84 64 C80 22 106 6 128 8 C154 8 166 32 168 64 C172 98 188 118 192 152 L52 152 C68 122 84 104 84 64 Z" fill="#746b5d" filter="url(#b3)"/>
<path d="M152 50 C164 84 180 120 190 152 L150 152 C156 120 158 90 152 50 Z" fill="#a29b8f" filter="url(#b3)"/>
<path d="M54 152 C70 124 82 106 86 60 C84 36 92 22 104 14 C96 40 94 100 100 152 Z" fill="#5d5446" filter="url(#b3)"/>
<path d="M92 30 C100 12 122 8 140 14 C126 12 104 18 92 30 Z" fill="#6a6154" filter="url(#b2)"/>
<!-- face -->
<ellipse cx="123" cy="74" rx="33" ry="47" fill="url(#vface)" filter="url(#b3)"/>
<ellipse cx="121" cy="132" rx="24" ry="18" fill="#6a5d53" filter="url(#b3)"/>
<!-- eyes -->
<ellipse cx="105" cy="56" rx="10" ry="5" fill="#4d443e" opacity=".9" filter="url(#b2)"/>
<ellipse cx="139" cy="56" rx="10" ry="5" fill="#4d443e" opacity=".9" filter="url(#b2)"/>
<path d="M94 45 Q105 40 117 45" stroke="#63574e" stroke-width="2.2" fill="none" filter="url(#b15)"/>
<path d="M129 45 Q140 40 152 46" stroke="#63574e" stroke-width="2.2" fill="none" filter="url(#b15)"/>
<!-- nose -->
<ellipse cx="121" cy="81" rx="8" ry="4" fill="#705f55" opacity=".85" filter="url(#b2)"/>
<!-- mouth -->
<ellipse cx="120" cy="102" rx="14" ry="6.5" fill="#5f4c46" filter="url(#b2)"/>
<ellipse cx="120" cy="100" rx="8.5" ry="2.4" fill="#bdb697" filter="url(#b15)"/>
<!-- name label -->
<rect x="0" y="127.5" width="116" height="16" rx="2" fill="#5a5853" opacity=".5"/>
<g fill="#fff"><rect x="5" y="136.6" width="2.2" height="3.8"/><rect x="8.400" y="134.400" width="2.200" height="6"/><rect x="11.800" y="132" width="2.200" height="8.400"/><rect x="15.200" y="129.600" width="2.200" height="10.800"/></g>
</g>
</svg>
<div class="t w" style="left:1045.5px;top:390.83px;font-size:10.6px;transform:scaleX(1.0361);">Zarina&nbsp; Ohrimenko</div>


<!-- ============ BOTTOM BAR ============ -->
<div id="bottombar" class="abs"></div>
<div class="t bl" style="left:-12px;top:668.81px;font-size:10.5px;transform:scaleX(1.0471);">Звук</div>
<div class="t bl" style="left:67.5px;top:668.81px;font-size:10.5px;transform:scaleX(0.8948);">Видео</div>
<div class="t bl" style="left:397px;top:668.81px;font-size:10.5px;transform:scaleX(0.9339);">Участники</div>
<div class="t bl" style="left:509.5px;top:668.81px;font-size:10.5px;transform:scaleX(0.8980);">Чат</div>
<div class="t bl" style="left:563.8px;top:668.81px;font-size:10.5px;transform:scaleX(0.9161);">Отреагировать</div>
<div class="t bl" style="left:657.5px;top:668.81px;font-size:10.5px;transform:scaleX(0.9045);">Поделиться</div>
<div class="t bl" style="left:735.8px;top:668.81px;font-size:10.5px;transform:scaleX(0.9648);">Приложения</div>
<div class="t bl" style="left:823.3px;top:668.81px;font-size:10.5px;transform:scaleX(0.8983);">Запись</div>
<div class="t bl" style="left:881.3px;top:668.81px;font-size:10.5px;transform:scaleX(0.9353);">Дополнительно</div>
<div class="t bl" style="left:1226.6px;top:668.81px;font-size:10.5px;transform:scaleX(0.8553);">Выйти</div>
<div class="t" style="left:437.3px;top:647.13px;font-size:10px;transform:scaleX(0.9079);color:#bdbdbd;">62</div>
<svg style="left:0;top:634px;" width="1280" height="50" viewBox="0 634 1280 50" fill="none" stroke="#fff" stroke-width="1.5" stroke-linecap="round" stroke-linejoin="round">
<!-- mic (cut) -->
<rect x="-0.400" y="644" width="7" height="11.500" rx="3.500"/>
<path d="M-4 652.500 a7 7 0 0 0 12.600 0 M3 659.500 V663 M-1 663 H6"/>
<path d="M12 643 L-1 657" stroke="#e8245d" stroke-width="2"/>
<!-- carets -->
<g stroke-width="1.500"><path d="M26 654.800 L28.8 652 L31.6 654.800"/><path d="M111.2 654.800 L114 652 L116.8 654.800"/><path d="M465.4 654.800 L468.2 652 L471 654.800"/><path d="M543 654.800 L545.8 652 L548.6 654.800"/></g>
<!-- video -->
<rect x="72.8" y="648.5" width="12.6" height="10.6" rx="1.8"/>
<path d="M85.6 652.6 L92.2 648.8 V658.8 L85.6 655 Z"/>
<path d="M92 643.5 L73 663" stroke="#e8245d" stroke-width="2"/>
<!-- participants -->
<circle cx="419.6" cy="649.6" r="2.9"/>
<path d="M415 661 v-2.2 a3 3 0 0 1 3 -3 h3.4 a3 3 0 0 1 3 3 v2.2 z"/>
<circle cx="427" cy="652.4" r="2.3"/>
<path d="M427.2 661 h2.6 v-1.4 a2.6 2.6 0 0 0 -2.6 -2.6 h-0.6"/>
<!-- chat -->
<path d="M512 649.2 h6.6 a3.6 3.6 0 0 1 3.6 3.6 v3.6 a3.6 3.6 0 0 1 -3.6 3.6 h-4.2 l-3 2.6 v-3 a3.6 3.6 0 0 1 -2.8 -3.5 v-3.3 a3.6 3.6 0 0 1 3.4 -3.6 z"/>
<path d="M513.6 646.8 a3.4 3.4 0 0 1 3.2 -2.4 h6 a3.6 3.6 0 0 1 3.6 3.6 v4.2 a3.4 3.4 0 0 1 -2.2 3.2"/>
<g fill="#fff" stroke="none"><circle cx="512.6" cy="654.7" r=".9"/><circle cx="515.4" cy="654.7" r=".9"/><circle cx="518.2" cy="654.7" r=".9"/></g>
<!-- heart -->
<path d="M599.8 661.4 C595 658.4 590.4 654.6 590.4 650.6 C590.4 647.6 592.6 645.8 595 645.8 C597 645.8 598.8 647 599.8 648.8 C600.8 647 602.6 645.8 604.6 645.8 C607 645.8 609.2 647.6 609.2 650.6 C609.2 654.6 604.6 658.4 599.8 661.4 Z" transform="rotate(-8 599.8 653.6)"/>
<!-- share -->
<rect x="675" y="645" width="21.3" height="17" rx="2.6" fill="#20e070" stroke="none"/>
<path d="M685.6 658 V650 M682.2 653.2 L685.6 649.8 L689 653.2" stroke="#000" stroke-width="1.8"/>
<!-- apps -->
<circle cx="772.2" cy="648.6" r="3"/>
<circle cx="762.2" cy="658.8" r="3"/>
<path d="M758.4 651 v-2.4 a3.2 3.2 0 0 1 3.2 -3.2 h3.4"/>
<path d="M776 656.4 v2.4 a3.2 3.2 0 0 1 -3.2 3.2 h-3.4"/>
<!-- record -->
<circle cx="840.5" cy="653.7" r="9.3"/>
<circle cx="840.5" cy="653.7" r="3.6" fill="#fff" stroke="none"/>
<!-- more -->
<circle cx="919.6" cy="653.7" r="9.3"/>
<g fill="#fff" stroke="none"><circle cx="915.2" cy="653.7" r="1.2"/><circle cx="919.6" cy="653.7" r="1.2"/><circle cx="924" cy="653.7" r="1.2"/></g>
<!-- leave -->
<g stroke="#dc1f55" stroke-width="1.5"><path d="M1239.6 645 V643.6 H1251.6 V660.6"/><path d="M1251.6 643.8 L1245.6 647.4 V663 L1251.6 660.4"/></g>
<g stroke-width="1.3"><circle cx="1238.2" cy="648.2" r="2.3"/><path d="M1235.6 652 L1232.6 654.2 L1233.8 656.4 L1236 655.2 L1232.4 661.6 L1233.8 663.4 L1237.4 658.8 L1239.8 663.2 L1242 662.6 L1240.4 657.6 L1241.4 655.2 L1243.2 656.8 L1243.6 654.6 L1240.2 651.6 Z"/></g>
</svg>


</body>
</html>
